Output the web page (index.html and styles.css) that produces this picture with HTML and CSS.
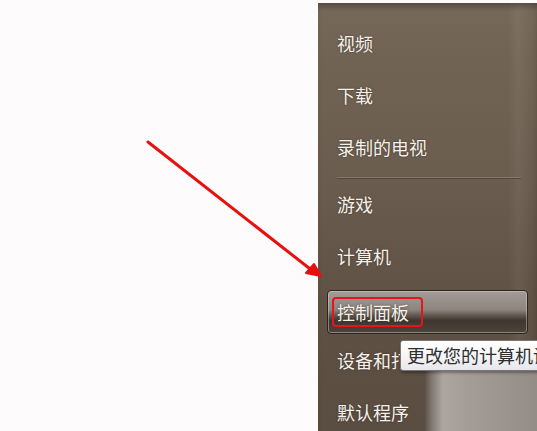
FILE: index.html
```html
<!DOCTYPE html>
<html lang="zh-CN">
<head>
  <meta charset="UTF-8" />
  <meta name="viewport" content="width=device-width, initial-scale=1.0"/>
  <title>开始菜单</title>
  <link rel="stylesheet" href="styles.css">
</head>
<body>
  <div class="screen">
    <div class="blank"></div>

    <div class="menu">
      <div class="item">视频</div>
      <div class="item">下载</div>
      <div class="item">录制的电视</div>
      <div class="sep"></div>
      <div class="item">游戏</div>
      <div class="item">计算机</div>
      <div class="item item-active"><span class="mark">控制面板</span></div>
      <div class="item">设备和打印机</div>
      <div class="item">默认程序</div>

      <!-- window behind, peeking over the menu -->
      <div class="behind"></div>
      <div class="tooltip">更改您的计算机设置</div>
    </div>

    <!-- annotation arrow -->
    <svg class="arrow" width="537" height="431" viewBox="0 0 537 431">
      <line x1="148" y1="142" x2="314" y2="272" stroke="#e8100f" stroke-width="3" stroke-linecap="round"/>
      <path d="M306 273 L321 276 L314 264 Z" fill="#e8100f" stroke="#e8100f" stroke-width="2" stroke-linejoin="round"/>
    </svg>
  </div>
</body>
</html>
```

FILE: styles.css
```css
body {
  margin: 0;
  background: #fdfbfc;
  font-family: "Noto Sans CJK SC", "Noto Sans", sans-serif;
}

.screen {
  position: relative;
  display: flex;
  width: 537px;
  height: 431px;
  overflow: hidden;
}

.blank {
  width: 318px;
  flex-shrink: 0;
}

.menu {
  position: relative;
  flex: 1;
  margin-top: 3px;
  padding-top: 18px;
  display: flex;
  flex-direction: column;
  background:
    linear-gradient(to right, rgba(255,255,255,0) 0, rgba(255,255,255,0) 190px, rgba(255,255,255,0.05) 200px, rgba(0,0,0,0.04) 219px),
    linear-gradient(to bottom, #6e5f51 0, #766859 8px, #716354 60px, #6a5c4e 180px, #5f5144 300px, #5a4d41 431px);
  box-shadow: inset 0 6px 6px -3px rgba(40, 30, 20, 0.35);
}

.item {
  flex-shrink: 0;
  height: 44px;
  margin: 0 9px 8px 9px;
  padding-left: 10px;
  display: flex;
  align-items: center;
  font-size: 18px;
  color: #f6f1ec;
  text-shadow: 0 0 2px rgba(40, 30, 20, 0.7);
  border-radius: 4px;
}

.sep {
  flex-shrink: 0;
  height: 0;
  margin: 0 16px 3px 19px;
  border-top: 1px solid #85776a;
  border-bottom: 1px solid #54473b;
}

.item-active {
  height: 42px;
  margin-top: 4px;
  margin-bottom: 4px;
  padding-left: 4px;
  border: 1px solid #2c241e;
  box-shadow: inset 0 0 0 1px rgba(220, 215, 210, 0.45);
  background: linear-gradient(to bottom, #a49d97 0%, #8c847e 45%, #6a615a 55%, #3f3630 70%, #4d443d 100%);
}

.mark {
  padding: 2px 12px 2px 3px;
  border: 2.5px solid #e8141c;
  border-radius: 4px;
  line-height: 22px;
}

.behind {
  position: absolute;
  left: 107px;
  top: 368px;
  right: 0;
  bottom: 0;
  background: linear-gradient(to right, #5e5247 0, #7d746d 6px, #aea7a1 18px, #a59e98 40px, #948d87 100%);
}

.tooltip {
  position: absolute;
  left: 82px;
  top: 337px;
  width: 160px;
  height: 29px;
  padding-left: 6px;
  font-size: 18px;
  line-height: 29px;
  white-space: nowrap;
  color: #2e2e2e;
  background: linear-gradient(to bottom, #ffffff 0, #f3f3f6 60%, #e6e6ec 100%);
  border: 1px solid #7a7672;
  border-radius: 3px;
  box-shadow: 1px 2px 3px rgba(0, 0, 0, 0.35);
}

.arrow {
  position: absolute;
  left: 0;
  top: 0;
}
```
